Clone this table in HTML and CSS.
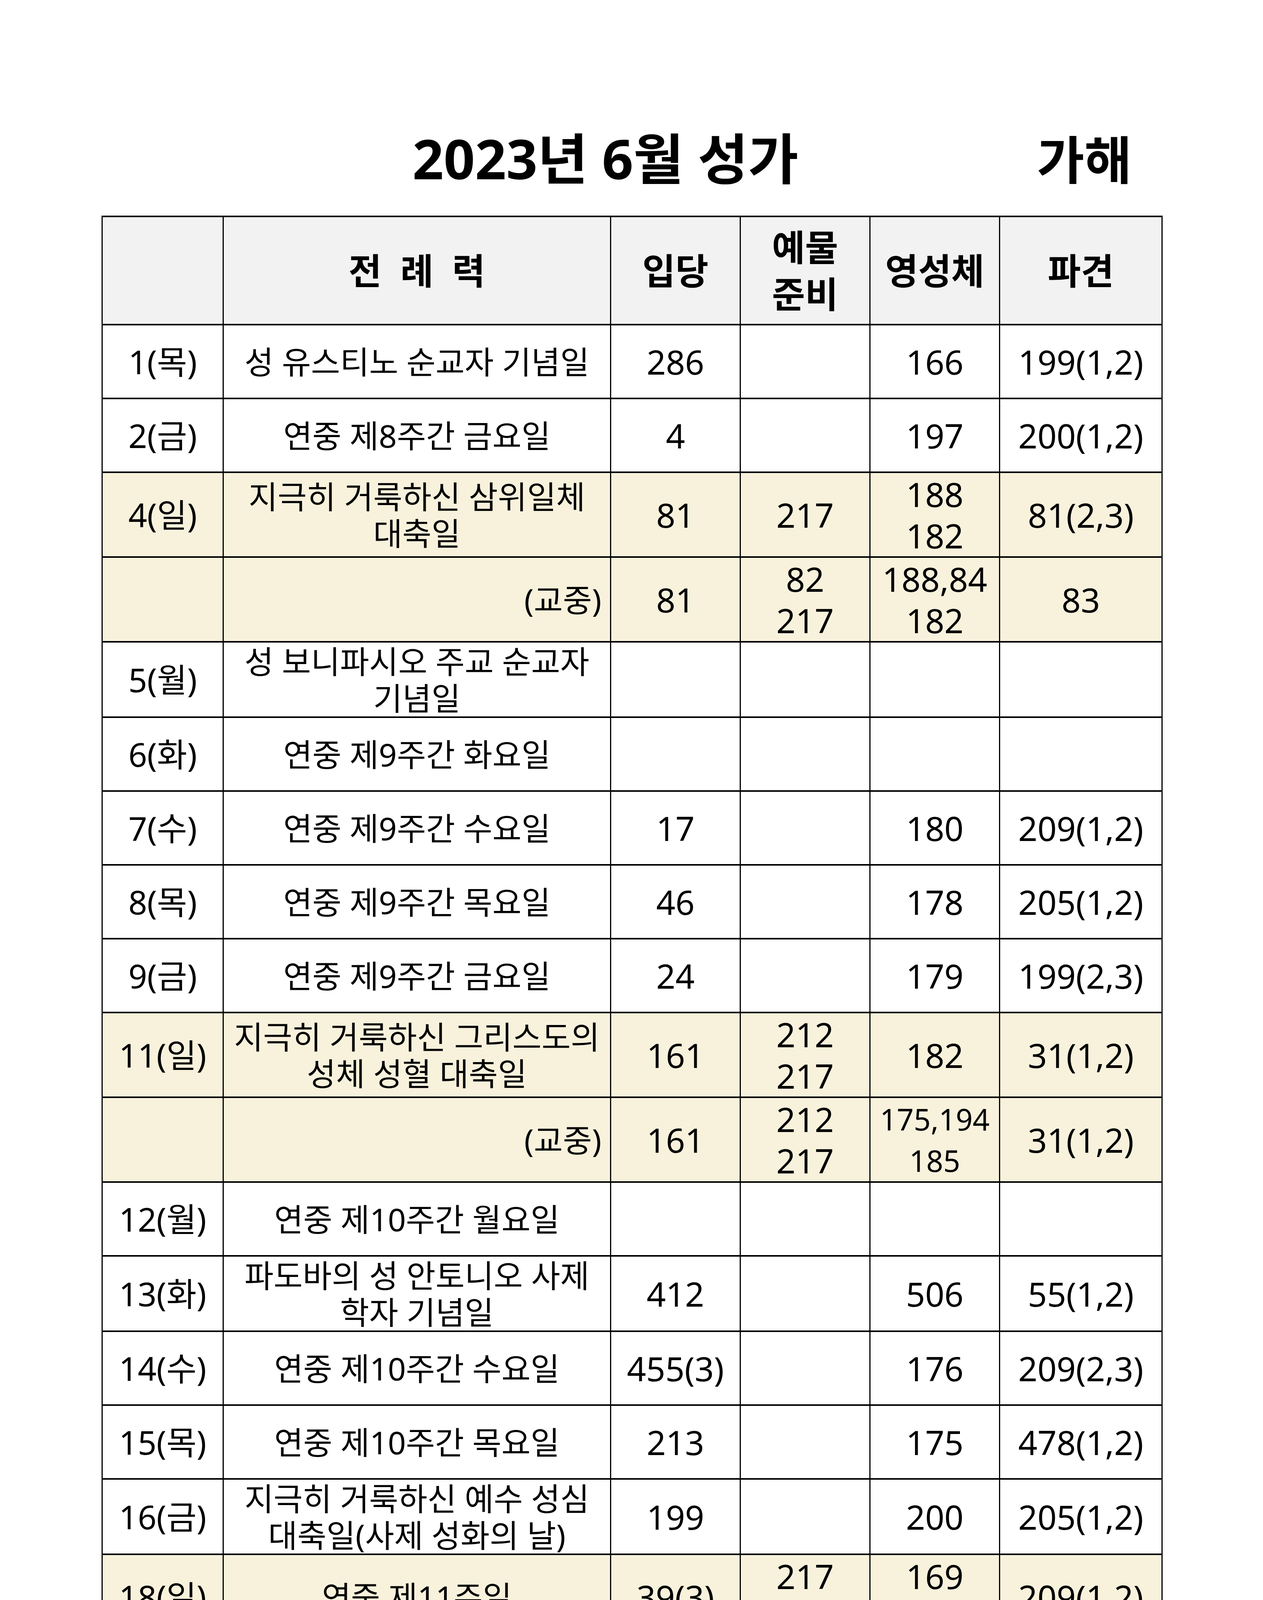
FILE: index.html
```html
<!DOCTYPE html>
<html lang="ko">
<head>
<meta charset="utf-8">
<title>2023년 6월 성가</title>
<link rel="stylesheet" href="styles.css">
</head>
<body>
<div class="page">
  <div class="title">
    <span class="title-main">2023년 6월 성가</span>
    <span class="title-side">가해</span>
  </div>
  <table class="schedule">
    <colgroup>
      <col class="c-date"><col class="c-lit"><col class="c-num"><col class="c-num"><col class="c-num"><col class="c-last">
    </colgroup>
    <thead>
      <tr class="r-head">
        <th></th>
        <th class="spaced">전 례 력</th>
        <th>입당</th>
        <th class="two">예물<br>준비</th>
        <th>영성체</th>
        <th>파견</th>
      </tr>
    </thead>
    <tbody>
      <tr class="r1"><td class="d">1(목)</td><td class="t">성 유스티노 순교자 기념일</td><td>286</td><td></td><td>166</td><td>199(1,2)</td></tr>
      <tr class="r1"><td class="d">2(금)</td><td class="t">연중 제8주간 금요일</td><td>4</td><td></td><td>197</td><td>200(1,2)</td></tr>
      <tr class="r2 sun"><td class="d">4(일)</td><td class="t tt">지극히 거룩하신 삼위일체<br>대축일</td><td>81</td><td>217</td><td class="m">188<br>182</td><td>81(2,3)</td></tr>
      <tr class="r2 sun"><td class="d"></td><td class="t mass">(교중)</td><td>81</td><td class="m">82<br>217</td><td class="m">188,84<br>182</td><td>83</td></tr>
      <tr class="r1b"><td class="d">5(월)</td><td class="t tt">성 보니파시오 주교 순교자<br>기념일</td><td></td><td></td><td></td><td></td></tr>
      <tr class="r1"><td class="d">6(화)</td><td class="t">연중 제9주간 화요일</td><td></td><td></td><td></td><td></td></tr>
      <tr class="r1"><td class="d">7(수)</td><td class="t">연중 제9주간 수요일</td><td>17</td><td></td><td>180</td><td>209(1,2)</td></tr>
      <tr class="r1"><td class="d">8(목)</td><td class="t">연중 제9주간 목요일</td><td>46</td><td></td><td>178</td><td>205(1,2)</td></tr>
      <tr class="r1"><td class="d">9(금)</td><td class="t">연중 제9주간 금요일</td><td>24</td><td></td><td>179</td><td>199(2,3)</td></tr>
      <tr class="r2 sun"><td class="d">11(일)</td><td class="t tt">지극히 거룩하신 그리스도의<br>성체 성혈 대축일</td><td>161</td><td class="m">212<br>217</td><td>182</td><td>31(1,2)</td></tr>
      <tr class="r2 sun"><td class="d"></td><td class="t mass">(교중)</td><td>161</td><td class="m">212<br>217</td><td class="m small">175,194<br>185</td><td>31(1,2)</td></tr>
      <tr class="r1"><td class="d">12(월)</td><td class="t">연중 제10주간 월요일</td><td></td><td></td><td></td><td></td></tr>
      <tr class="r1b"><td class="d">13(화)</td><td class="t tt">파도바의 성 안토니오 사제<br>학자 기념일</td><td>412</td><td></td><td>506</td><td>55(1,2)</td></tr>
      <tr class="r1"><td class="d">14(수)</td><td class="t">연중 제10주간 수요일</td><td>455(3)</td><td></td><td>176</td><td>209(2,3)</td></tr>
      <tr class="r1"><td class="d">15(목)</td><td class="t">연중 제10주간 목요일</td><td>213</td><td></td><td>175</td><td>478(1,2)</td></tr>
      <tr class="r1b"><td class="d">16(금)</td><td class="t tt">지극히 거룩하신 예수 성심<br>대축일(사제 성화의 날)</td><td>199</td><td></td><td>200</td><td>205(1,2)</td></tr>
      <tr class="r2 sun"><td class="d">18(일)</td><td class="t">연중 제11주일</td><td>39(3)</td><td class="m">217<br>216</td><td class="m">169<br>168</td><td>209(1,2)</td></tr>
      <tr class="r1"><td class="d">19(월)</td><td class="t">연중 제11주간 월요일</td><td></td><td></td><td></td><td></td></tr>
      <tr class="r1"><td class="d">20(화)</td><td class="t">연중 제11주간 화요일</td><td>431</td><td></td><td>152</td><td>205(3,4)</td></tr>
      <tr class="r1b"><td class="d">21(수)</td><td class="t tt">성 알로이시오 곤자가 수도자<br>기념일</td><td>432</td><td></td><td>174</td><td>202(1,2)</td></tr>
      <tr class="r1"><td class="d">22(목)</td><td class="t">연중 제11주간 목요일</td><td>401(2)</td><td></td><td>165</td><td>199(2,3)</td></tr>
      <tr class="r1"><td class="d">23(금)</td><td class="t">연중 제11주간 금요일</td><td>437(4)</td><td></td><td>504</td><td>202(2,3)</td></tr>
      <tr class="r2 sun"><td class="d">25(일)</td><td class="t tt tiny">민족의 화해와 일치를 위한<br>기도의 날 - 남북통일 기원 미사</td><td>456</td><td class="m">213<br>212</td><td class="m">160<br>159</td><td>63</td></tr>
      <tr class="r1"><td class="d">26(월)</td><td class="t">연중 제12주간 월요일</td><td></td><td></td><td></td><td></td></tr>
      <tr class="r2"><td class="d">27(화)</td><td class="t">연중 제12주간 화요일</td><td>64(2)</td><td></td><td class="m">157<br>158</td><td>31(1,2)</td></tr>
      <tr class="r1"><td class="d">28(수)</td><td class="t smaller">성 이레네오 주교 순교자 기념일</td><td>55</td><td></td><td>499</td><td>294(1,2)</td></tr>
      <tr class="r1b"><td class="d">29(목)</td><td class="t tt">성 베드로와 성 바오로 사도<br>대축일</td><td>291</td><td></td><td>496</td><td>291(2,3)</td></tr>
      <tr class="r2"><td class="d">30(금)</td><td class="t">연중 제12주간 금요일</td><td>48</td><td></td><td class="m">172<br>155</td><td>200(1,2)</td></tr>
    </tbody>
  </table>
</div>
</body>
</html>
```

FILE: styles.css
```css
html, body {
  margin: 0;
  padding: 0;
  background: #ffffff;
}

body {
  font-family: "Noto Sans", "Noto Sans CJK KR", sans-serif;
  color: #000000;
}

.page {
  padding: 335px 0 0 260px;
  width: 2714px;
}

.title {
  display: flex;
  align-items: baseline;
  font-weight: 700;
  font-size: 140px;
  line-height: 140px;
  height: 140px;
  margin-bottom: 77px;
}

.title-main {
  margin-left: 796px;
}

.title-side {
  margin-left: auto;
  margin-right: 76px;
  font-size: 132px;
}

.schedule {
  border-collapse: collapse;
  table-layout: fixed;
  width: 2714px;
}

.c-date { width: 310px; }
.c-lit { width: 992px; }
.c-num { width: 332px; }
.c-last { width: 416px; }

.schedule th,
.schedule td {
  border-style: solid;
  border-color: #000000;
  border-width: 4px 3px;
  padding: 0;
  text-align: center;
  vertical-align: middle;
  white-space: nowrap;
  font-size: 86px;
  line-height: 108px;
  font-weight: 400;
}

.schedule th {
  background: #f2f2f2;
  font-weight: 700;
  font-size: 92px;
  line-height: 120px;
}

.schedule th.spaced {
  word-spacing: 24px;
}

.r-head { height: 277px; }
.r1 { height: 189px; }
.r1b { height: 193px; }
.r2 { height: 217px; }

.sun td { background: #f8f2dc; }

.schedule td.d {
  font-size: 84px;
}

.schedule td.t {
  font-size: 81px;
  line-height: 100px;
}

.schedule td.tt {
  line-height: 94px;
}

.schedule td.mass {
  text-align: right;
  padding-right: 22px;
}

.schedule td.m {
  line-height: 106px;
}

.schedule td.small {
  font-size: 76px;
}

.schedule td.tiny {
  font-size: 68px;
  line-height: 96px;
  word-spacing: 16px;
}

.schedule td.smaller {
  font-size: 72px;
}
```
